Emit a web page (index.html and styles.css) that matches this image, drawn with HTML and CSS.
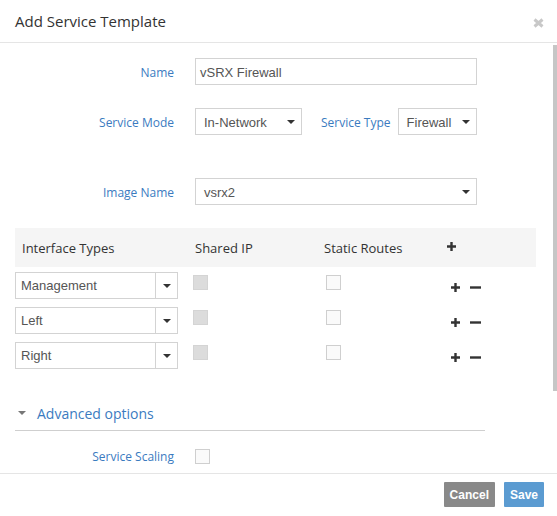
FILE: index.html
```html
<!DOCTYPE html>
<html>
<head>
<meta charset="utf-8">
<link rel="stylesheet" href="styles.css">
</head>
<body>
<div class="modal">
  <div class="modal-header">
    <h4 class="modal-title">Add Service Template</h4>
    <span class="close"><svg width="11" height="10" viewBox="0 0 11 10"><path d="M1.5 1.5 L9.5 8.5 M9.5 1.5 L1.5 8.5" stroke="#c8c8c8" stroke-width="3" fill="none"/></svg></span>
  </div>
  <div class="modal-body">
    <div class="scroll-thumb"></div>
    <div class="form-row row-name">
      <label class="lbl">Name</label>
      <div class="text-input wide">vSRX Firewall</div>
    </div>
    <div class="form-row row-mode">
      <label class="lbl">Service Mode</label>
      <div class="select sel-mode"><span>In-Network</span><i class="caret"></i></div>
      <label class="lbl-inline">Service Type</label>
      <div class="select sel-type"><span>Firewall</span><i class="caret"></i></div>
    </div>
    <div class="form-row row-image">
      <label class="lbl">Image Name</label>
      <div class="select wide"><span>vsrx2</span><i class="caret"></i></div>
    </div>
    <div class="iface-table">
      <div class="iface-head">
        <div class="head-first">Interface Types</div>
        <div>Shared IP</div>
        <div>Static Routes</div>
        <div class="head-add"><svg width="9" height="9" viewBox="0 0 9 9"><path d="M4.5 0 V9 M0 4.5 H9" stroke="#333" stroke-width="2.4"/></svg></div>
      </div>
      <div class="iface-row first">
        <div class="row-select"><span class="rs-text">Management</span><span class="rs-arrow"><i class="caret"></i></span></div>
        <div><span class="cb cb-disabled"></span></div>
        <div><span class="cb cb-empty"></span></div>
        <div class="actions"><svg width="9" height="9" viewBox="0 0 9 9"><path d="M4.5 0 V9 M0 4.5 H9" stroke="#333" stroke-width="2.4"/></svg><svg class="minus" width="11" height="9" viewBox="0 0 11 9"><path d="M0 4.5 H11" stroke="#333" stroke-width="2.4"/></svg></div>
      </div>
      <div class="iface-row">
        <div class="row-select"><span class="rs-text">Left</span><span class="rs-arrow"><i class="caret"></i></span></div>
        <div><span class="cb cb-disabled"></span></div>
        <div><span class="cb cb-empty"></span></div>
        <div class="actions"><svg width="9" height="9" viewBox="0 0 9 9"><path d="M4.5 0 V9 M0 4.5 H9" stroke="#333" stroke-width="2.4"/></svg><svg class="minus" width="11" height="9" viewBox="0 0 11 9"><path d="M0 4.5 H11" stroke="#333" stroke-width="2.4"/></svg></div>
      </div>
      <div class="iface-row">
        <div class="row-select"><span class="rs-text">Right</span><span class="rs-arrow"><i class="caret"></i></span></div>
        <div><span class="cb cb-disabled"></span></div>
        <div><span class="cb cb-empty"></span></div>
        <div class="actions"><svg width="9" height="9" viewBox="0 0 9 9"><path d="M4.5 0 V9 M0 4.5 H9" stroke="#333" stroke-width="2.4"/></svg><svg class="minus" width="11" height="9" viewBox="0 0 11 9"><path d="M0 4.5 H11" stroke="#333" stroke-width="2.4"/></svg></div>
      </div>
    </div>
    <div class="adv">
      <i class="adv-caret"></i>
      <span class="adv-title">Advanced options</span>
    </div>
    <div class="form-row row-scaling">
      <label class="lbl">Service Scaling</label>
      <span class="cb cb-empty"></span>
    </div>
  </div>
  <div class="modal-footer">
    <button class="btn btn-cancel">Cancel</button>
    <button class="btn btn-save">Save</button>
  </div>
</div>
</body>
</html>
```

FILE: styles.css
```css
html, body {
  margin: 0;
  padding: 0;
  background: #fff;
}
body {
  font-family: "Open Sans", "DejaVu Sans", sans-serif;
  color: #333;
}
.modal {
  width: 557px;
  height: 516px;
  overflow: hidden;
}
.modal-header {
  box-sizing: border-box;
  border-bottom: 1px solid #e5e5e5;
  height: 43px;
  display: flex;
  align-items: center;
  justify-content: space-between;
  padding: 0 13px 0 15px;
}
.modal-title {
  margin: 0;
  font-size: 15px;
  font-weight: 400;
  line-height: 20px;
  color: #333;
}
.close {
  display: flex;
  margin-top: 4px;
}
.modal-body {
  position: relative;
  height: 430px;
  box-sizing: border-box;
  overflow: hidden;
  padding: 15px 21px 0 15px;
}
.scroll-thumb {
  position: absolute;
  top: 2px;
  right: 0;
  width: 4px;
  height: 346px;
  background: #c6c6c6;
}
.form-row {
  display: flex;
  align-items: center;
  height: 27px;
}
.lbl {
  width: 159px;
  flex: none;
  text-align: right;
  font-size: 12px;
  color: #3b7bbf;
  margin-right: 21px;
  margin-top: 2px;
}
.lbl-inline {
  font-size: 12px;
  color: #3b7bbf;
  margin: 2px 7px 0 19px;
  white-space: nowrap;
}
.row-mode { margin-top: 23px; }
.row-image { margin-top: 43px; }
.text-input {
  box-sizing: border-box;
  height: 27px;
  border: 1px solid #d3d3d3;
  padding: 1px 4px 0;
  font-family: "Liberation Sans", Arial, sans-serif;
  font-size: 13px;
  line-height: 25px;
  color: #555;
}
.wide { width: 282px; }
.select {
  box-sizing: border-box;
  height: 27px;
  border: 1px solid #d3d3d3;
  display: flex;
  align-items: center;
  justify-content: space-between;
  padding: 1px 6px 0 8px;
  font-family: "Liberation Sans", Arial, sans-serif;
  font-size: 13px;
  color: #555;
  flex: none;
}
.sel-mode { width: 107px; }
.sel-type { width: 79px; }
.caret {
  display: block;
  width: 0;
  height: 0;
  border-left: 4px solid transparent;
  border-right: 4px solid transparent;
  border-top: 4px solid #333;
}
.iface-table { margin-top: 23px; }
.iface-head {
  height: 39px;
  background: #f5f5f5;
  display: grid;
  grid-template-columns: 180px 129px 123px 1fr;
  align-items: center;
  font-size: 13px;
  color: #333;
}
.head-first { padding-left: 7px; }
.head-add { display: flex; margin-top: -2px; }
.iface-row {
  display: grid;
  grid-template-columns: 178px 133px 125px 1fr;
  align-items: start;
  height: 27px;
  margin-top: 8px;
}
.iface-row.first { margin-top: 5px; }
.row-select {
  box-sizing: border-box;
  width: 163px;
  height: 27px;
  border: 1px solid #d3d3d3;
  display: flex;
  font-family: "Liberation Sans", Arial, sans-serif;
  font-size: 13px;
  color: #555;
}
.rs-text {
  flex: 1;
  padding-left: 5px;
  line-height: 25px;
}
.rs-arrow {
  width: 21px;
  border-left: 1px solid #d3d3d3;
  display: flex;
  align-items: center;
  justify-content: center;
}
.cb {
  display: block;
  box-sizing: border-box;
  width: 15px;
  height: 15px;
}
.iface-row .cb { margin-top: 3px; }
.cb-disabled {
  background: #dcdcdc;
  border: 1px solid #d4d4d4;
}
.cb-empty {
  background: #fafafa;
  border: 1px solid #cfcfcf;
}
.actions {
  display: flex;
  align-items: center;
  height: 27px;
  padding-top: 4px;
  box-sizing: border-box;
}
.actions .minus { margin-left: 10px; }
.adv {
  margin-top: 33px;
  width: 470px;
  height: 22px;
  padding-bottom: 6px;
  border-bottom: 1px solid #cfcfcf;
  display: flex;
  align-items: center;
}
.adv-caret {
  display: block;
  width: 0;
  height: 0;
  margin-left: 3px;
  margin-right: 11px;
  border-left: 4px solid transparent;
  border-right: 4px solid transparent;
  border-top: 4px solid #777;
}
.adv-title {
  font-size: 14px;
  color: #3b7bbf;
}
.row-scaling {
  margin-top: 17px;
  height: 17px;
}
.row-scaling .lbl { margin-top: 0; }
.modal-footer {
  border-top: 1px solid #e5e5e5;
  display: flex;
  justify-content: flex-end;
  gap: 9px;
  padding: 8px 13px 0 0;
}
.btn {
  height: 25px;
  border: none;
  padding: 0 6px;
  margin: 0;
  font-family: "Liberation Sans", Arial, sans-serif;
  font-size: 12px;
  font-weight: bold;
  color: #fff;
  border-radius: 1px;
}
.btn-cancel { background: #898989; }
.btn-save { background: #5b9bd1; }
```
